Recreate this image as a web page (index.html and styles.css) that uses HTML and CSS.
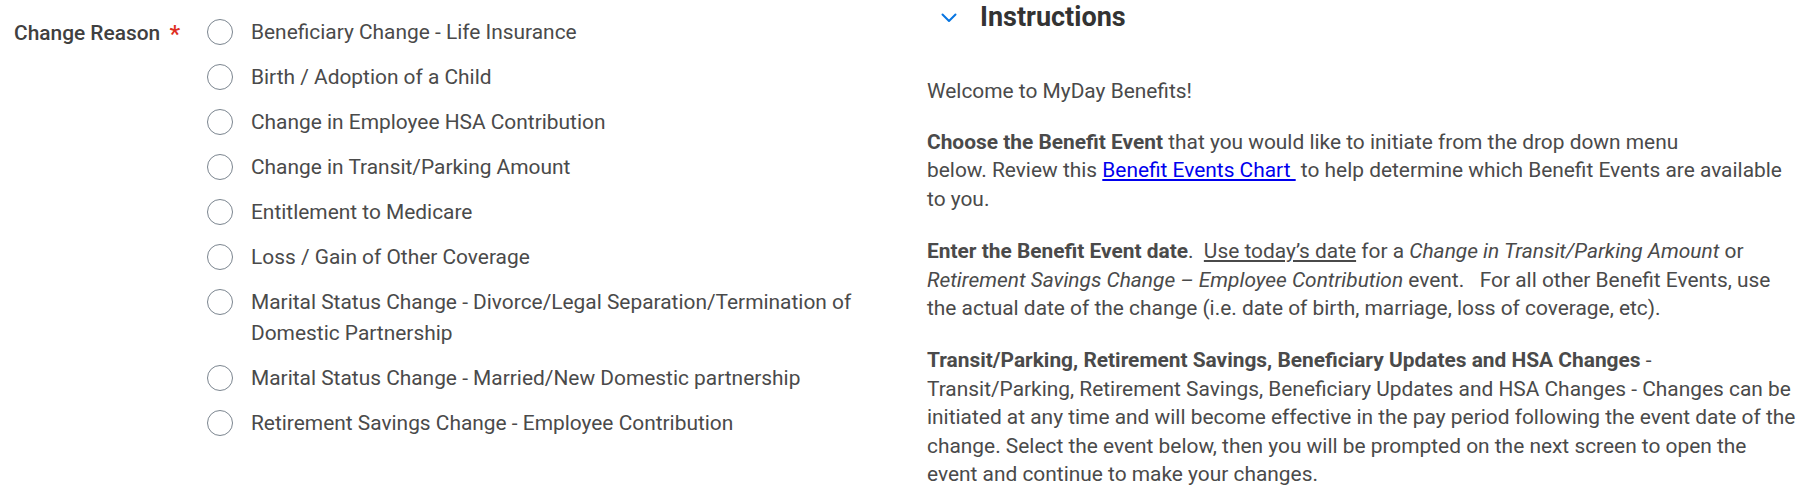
FILE: index.html
```html
<!DOCTYPE html>
<html lang="en">
<head>
<meta charset="utf-8">
<title>Change Benefits</title>
<link rel="stylesheet" href="styles.css">
</head>
<body>
<div class="page">
  <section class="form-col">
    <div class="field">
      <div class="field-label">Change Reason <span class="req">*</span></div>
      <ul class="radio-group">
        <li class="radio-item"><span class="radio"></span><span class="radio-text">Beneficiary Change - Life Insurance</span></li>
        <li class="radio-item"><span class="radio"></span><span class="radio-text">Birth / Adoption of a Child</span></li>
        <li class="radio-item"><span class="radio"></span><span class="radio-text">Change in Employee HSA Contribution</span></li>
        <li class="radio-item"><span class="radio"></span><span class="radio-text">Change in Transit/Parking Amount</span></li>
        <li class="radio-item"><span class="radio"></span><span class="radio-text">Entitlement to Medicare</span></li>
        <li class="radio-item"><span class="radio"></span><span class="radio-text">Loss / Gain of Other Coverage</span></li>
        <li class="radio-item"><span class="radio"></span><span class="radio-text">Marital Status Change - Divorce/Legal Separation/Termination of Domestic Partnership</span></li>
        <li class="radio-item"><span class="radio"></span><span class="radio-text">Marital Status Change - Married/New Domestic partnership</span></li>
        <li class="radio-item"><span class="radio"></span><span class="radio-text">Retirement Savings Change - Employee Contribution</span></li>
      </ul>
    </div>
  </section>
  <section class="info-col">
    <h2 class="info-heading">
      <svg class="chevron" width="16" height="10" viewBox="0 0 16 10"><polyline points="1.5,1.5 8,8 14.5,1.5" fill="none" stroke="#0875e1" stroke-width="2" stroke-linecap="round" stroke-linejoin="round"/></svg>
      <span>Instructions</span>
    </h2>
    <div class="info-body">
      <p class="welcome">Welcome to MyDay Benefits!</p>
      <p><b>Choose the Benefit Event</b> that you would like to initiate from the drop down menu<br>below. Review this <a href="#" class="link">Benefit Events Chart&nbsp;</a> to help determine which Benefit Events are available to you.</p>
      <p><b>Enter the Benefit Event date</b>.&nbsp; <u>Use today’s date</u> for a <i>Change in Transit/Parking Amount</i> or <i>Retirement Savings Change – Employee Contribution</i> event.&nbsp;&nbsp; For all other Benefit Events, use the actual date of the change (i.e. date of birth, marriage, loss of coverage, etc).</p>
      <p><b>Transit/Parking, Retirement Savings, Beneficiary Updates and HSA Changes</b> -<br>Transit/Parking, Retirement Savings, Beneficiary Updates and HSA Changes - Changes can be initiated at any time and will become effective in the pay period following the event date of the change. Select the event below, then you will be prompted on the next screen to open the<br>event and continue to make your changes.</p>
    </div>
  </section>
</div>
</body>
</html>
```

FILE: styles.css
```css
* { box-sizing: border-box; }
html, body {
  margin: 0;
  padding: 0;
  background: #ffffff;
}
body {
  font-family: Roboto, "Noto Sans", "Liberation Sans", sans-serif;
  font-size: 20.9px;
  line-height: 28.4px;
  color: #4a4a4a;
}
.page {
  display: grid;
  grid-template-columns: 900px 1fr;
  width: 1812px;
  height: 493px;
  overflow: hidden;
}
.form-col {
  padding: 17px 30px 0 14px;
}
.field {
  display: flex;
  align-items: flex-start;
}
.field-label {
  width: 193px;
  flex: none;
  font-weight: 500;
  line-height: 31px;
  color: #404040;
}
.req {
  color: #de2e21;
  font-size: 24px;
  margin-left: 4px;
  font-weight: 500;
  position: relative;
  top: 2px;
}
.radio-group {
  list-style: none;
  margin: 0;
  padding: 0;
  flex: 1;
}
.radio-item {
  display: flex;
  align-items: flex-start;
  gap: 18px;
  line-height: 31px;
  margin-bottom: 14px;
}
.radio {
  flex: none;
  width: 26px;
  height: 26px;
  border-radius: 50%;
  border: 1.6px solid #7b858f;
  background: #fff;
  margin-top: 2px;
}
.radio-text {
  flex: 1;
}
.info-col {
  padding: 0 12px 0 27px;
}
.info-heading {
  display: flex;
  align-items: center;
  gap: 23px;
  margin: 0 0 42px 14px;
  font-size: 27px;
  line-height: 34.56px;
  font-weight: 700;
  color: #333333;
}
.chevron {
  flex: none;
  margin-top: 2px;
}
.info-body p {
  margin: 0 0 24px 0;
}
.info-body p.welcome {
  margin-bottom: 23px;
}
.info-body b {
  font-weight: 700;
}
.link {
  color: #0000ee;
  text-decoration: underline;
}
```
